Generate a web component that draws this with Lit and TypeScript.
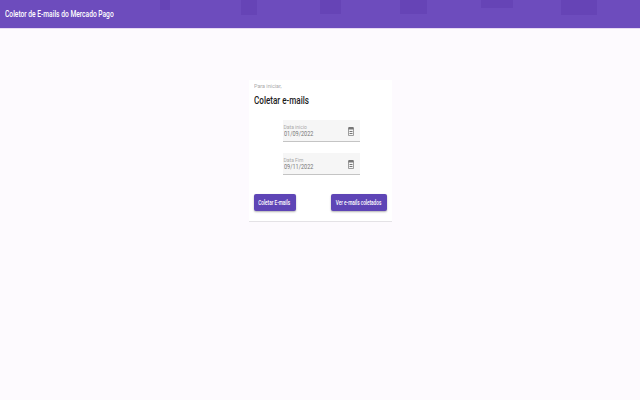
import { LitElement, html, css } from "lit";
import { customElement } from "lit/decorators.js";

@customElement("app-root")
export class AppRoot extends LitElement {
  static styles = css`
    :host {
      display: block;
      width: 640px;
      height: 400px;
      background: #fdfafe;
      font-family: Roboto, "Liberation Sans", sans-serif;
      overflow: hidden;
    }
    .sq {
      display: inline-block;
      white-space: nowrap;
      transform-origin: left center;
    }
    .toolbar {
      height: 29px;
      box-sizing: border-box;
      padding-left: 5px;
      display: flex;
      align-items: center;
      color: #fff;
      font-size: 9px;
      font-weight: 500;
      background-color: #6d4cbd;
      background-image:
        linear-gradient(#6644b6, #6644b6),
        linear-gradient(#6644b6, #6644b6),
        linear-gradient(#6644b6, #6644b6),
        linear-gradient(#6644b6, #6644b6),
        linear-gradient(#6644b6, #6644b6),
        linear-gradient(#6644b6, #6644b6);
      background-repeat: no-repeat;
      background-size: 10px 10px, 16px 15px, 21px 14px, 27px 14px, 32px 8px, 36px 15px;
      background-position: 160px 0, 241px 0, 320px 0, 400px 0, 481px 0, 561px 0;
      border-bottom: 1px solid #e7d9f3;
    }
    .toolbar .sq { transform: scaleX(0.74); }
    .main {
      display: flex;
      justify-content: center;
      padding-top: 51px;
    }
    .card {
      width: 143px;
      height: 142px;
      box-sizing: border-box;
      padding: 2px 5px 0;
      background: #fff;
      border-bottom: 1px solid #e4e2e6;
      display: flex;
      flex-direction: column;
    }
    .step { font-size: 6px; color: #aaa; line-height: 8px; }
    .step .sq { transform: scaleX(0.9); }
    .title { font-size: 10px; font-weight: 500; color: #1c1c1c; line-height: 14px; margin-top: 4px; }
    .title .sq { transform: scaleX(0.81); }
    .fields {
      display: flex;
      flex-direction: column;
      align-items: center;
      gap: 11px;
      margin-top: 12px;
      padding-left: 2px;
    }
    .field {
      width: 77px;
      height: 22px;
      box-sizing: border-box;
      background: #f6f6f6;
      border-bottom: 1px solid #c4c4c4;
      padding: 0 6px 0 1px;
      display: flex;
      justify-content: space-between;
      align-items: center;
    }
    .labels { display: flex; flex-direction: column; }
    .lab { font-size: 5px; line-height: 6px; color: #aaa; }
    .val { font-size: 6.5px; line-height: 8px; color: #777; }
    .val .sq { transform: scaleX(0.85); }
    .field svg { width: 6px; height: 10px; }
    .actions {
      display: flex;
      justify-content: space-between;
      margin-top: 19px;
    }
    button {
      height: 17px;
      border: none;
      border-radius: 2px;
      padding: 0;
      background: #5e45b6;
      color: #fff;
      font: 500 6.5px Roboto, "Liberation Sans", sans-serif;
      box-shadow: 0 1px 2px rgba(0,0,0,.3);
      display: flex;
      align-items: center;
      justify-content: center;
    }
    button .sq { transform-origin: center; transform: scaleX(0.72); }
    .b1 { width: 42px; }
    .b2 { width: 56px; }
  `;

  private field(label: string, value: string) {
    return html`<div class="field">
      <div class="labels"><span class="lab"><span class="sq">${label}</span></span><span class="val"><span class="sq">${value}</span></span></div>
      <svg viewBox="0 0 6 10"><path d="M.5 2h5v7.5h-5z" fill="none" stroke="#888" stroke-width=".8"/><path d="M.5 1h5v2.5h-5zM1.5 5h3v1h-3zM1.5 7h3v1h-3z" fill="#777"/></svg>
    </div>`;
  }

  render() {
    return html`
      <div class="toolbar"><span class="sq">Coletor de E-mails do Mercado Pago</span></div>
      <div class="main">
        <div class="card">
          <div class="step"><span class="sq">Para iniciar,</span></div>
          <div class="title"><span class="sq">Coletar e-mails</span></div>
          <div class="fields">
            ${this.field("Data inicio", "01/09/2022")}
            ${this.field("Data Fim", "09/11/2022")}
          </div>
          <div class="actions">
            <button class="b1"><span class="sq">Coletar E-mails</span></button>
            <button class="b2"><span class="sq">Ver e-mails coletados</span></button>
          </div>
        </div>
      </div>
    `;
  }
}
